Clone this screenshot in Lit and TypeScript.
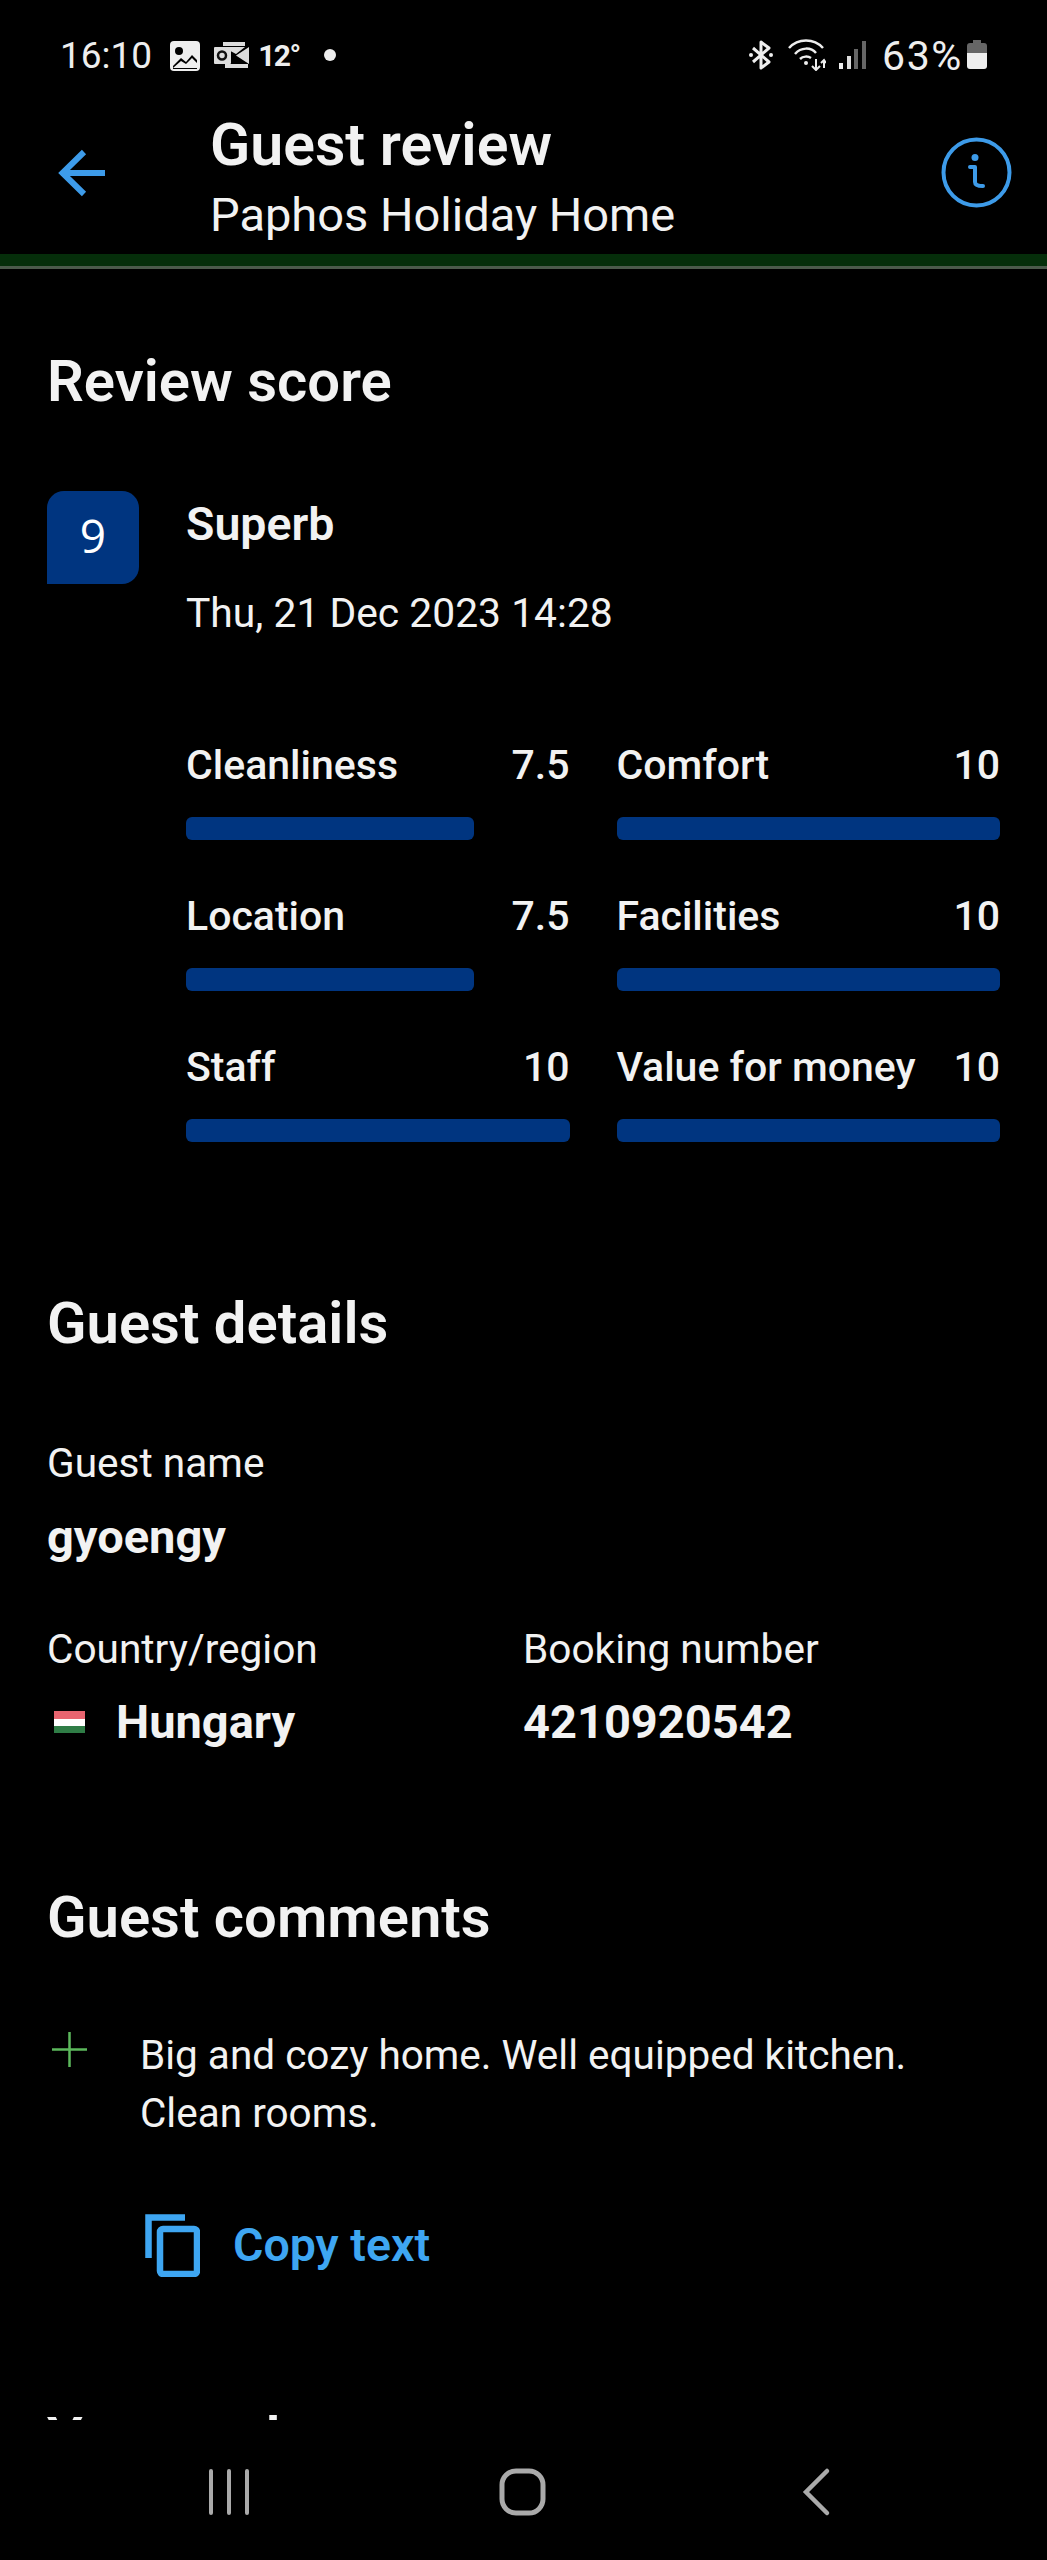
import { LitElement, html, css } from "lit";
import { customElement } from "lit/decorators.js";

const ratings: [string, string, number][] = [
  ["Cleanliness", "7.5", 75],
  ["Comfort", "10", 100],
  ["Location", "7.5", 75],
  ["Facilities", "10", 100],
  ["Staff", "10", 100],
  ["Value for money", "10", 100],
];

@customElement("app-root")
export class AppRoot extends LitElement {
  static styles = css`
    :host {
      display: flex;
      flex-direction: column;
      width: 1047px;
      height: 2560px;
      overflow: hidden;
      background: #000;
      color: #f2f2f2;
      font-family: Roboto, "Liberation Sans", sans-serif;
    }
    svg { display: block; flex: none; }
    .status {
      height: 96px;
      flex: none;
      display: flex;
      align-items: flex-start;
      padding: 39px 60px 0 60px;
      box-sizing: border-box;
    }
    .time, .pct {
      font-size: 37px;
      line-height: 34px;
      font-weight: 400;
      color: #eee;
    }
    .temp {
      font-size: 30px;
      font-weight: 700;
      line-height: 34px;
      margin-left: 9px;
      letter-spacing: -1.5px;
      color: #eee;
    }
    .i-img { margin: 2px 0 0 18px; }
    .i-out { margin: 3px 0 0 14px; }
    .i-dot { margin: 10px 0 0 24px; }
    .spacer { flex: 1; }
    .i-bt { margin: 1px 0 0 0; }
    .i-wifi { margin: 0 0 0 14px; }
    .i-sig { margin: 2px 0 0 13px; }
    .pct { margin-left: 16px; letter-spacing: 1.600px; font-size: 41px; }
    .i-bat { margin: 1px 0 0 4px; }

    .toolbar {
      height: 158px;
      flex: none;
      box-sizing: border-box;
      display: flex;
      align-items: center;
      padding: 0 35px 5px 58px;
    }
    .titles { flex: 1; margin-left: 104px; align-self: flex-start; margin-top: 19px; }
    .title { font-size: 59px; line-height: 60px; font-weight: 600; margin-bottom: 10px; }
    .sub { font-size: 47px; line-height: 60px; font-weight: 400; }
    .stripe { height: 12px; flex: none; background: #052e0a; }
    .rule { height: 3px; flex: none; background: #4b5a4b; }

    main {
      flex: 1;
      min-height: 0;
      overflow: hidden;
      padding: 82px 47px 0;
    }
    h2 { margin: 0; font-size: 58px; line-height: 60px; font-weight: 600; }
    .score { display: flex; gap: 47px; margin-top: 80px; }
    .badge {
      width: 92px;
      height: 93px;
      flex: none;
      box-sizing: border-box;
      padding-bottom: 6px;
      background: #003580;
      border-radius: 17px 17px 17px 0;
      display: flex;
      align-items: center;
      justify-content: center;
      font-family: "Open Sans", sans-serif;
      font-size: 46px;
      color: #fff;
    }
    .detail { flex: 1; padding-top: 3px; }
    .superb { font-size: 46.500px; line-height: 60px; font-weight: 600; margin-bottom: 30px; }
    .date { font-size: 40.800px; line-height: 58px; }
    .grid {
      display: grid;
      grid-template-columns: 1fr 1fr;
      column-gap: 47px;
      row-gap: 47px;
      margin-top: 94px;
    }
    .row { display: flex; justify-content: space-between; font-size: 41px; line-height: 58px; font-weight: 500; }
    .track { height: 23px; margin-top: 23px; }
    .bar { height: 100%; background: #003580; border-radius: 6px; }

    .details { margin-top: 151px; }
    .label { font-size: 40.600px; line-height: 58px; }
    .value { font-size: 47px; line-height: 60px; font-weight: 700; margin-top: 14.600px; }
    .name { margin-top: 81px; }
    .pair { display: grid; grid-template-columns: 476px 1fr; margin-top: 53px; }
    .country { display: flex; align-items: center; }
    .flag { width: 31px; height: 22px; margin: 0 31px 0 7px; flex: none; display: flex; flex-direction: column; }
    .flag i { flex: 1; display: block; }

    .comments { margin-top: 134.600px; }
    .comment { display: flex; margin-top: 79px; }
    .plus { width: 93px; flex: none; padding: 6px 0 0 5px; box-sizing: border-box; }
    .text { font-size: 40.500px; line-height: 58.500px; width: 830px; }
    .copy {
      display: flex;
      align-items: center;
      margin: 71px 0 0 98px;
      gap: 33px;
      height: 63px;
      color: #3ea6f2;
      font-size: 46.500px;
      line-height: 64px;
      font-weight: 600;
    }
    .next { margin-top: 131px; }

    .nav { height: 140px; flex: none; background: #000; display: flex; }
    .nav svg { width: 1047px; height: 140px; }
  `;

  render() {
    return html`
      <div class="status">
        <span class="time">16:10</span>
        <svg class="i-img" width="30" height="30" viewBox="0 0 30 30">
          <rect width="30" height="30" rx="4" fill="#eee" />
          <circle cx="9" cy="10" r="4" fill="#000" />
          <path d="M3 25l8-8 5 4 6-7 5 5v9H3z" fill="#000" />
          <path d="M3 27l8-7 5 3 6-6 5 5v5z" fill="#eee" />
        </svg>
        <svg class="i-out" width="35" height="26" viewBox="0 0 35 26">
          <path d="M9 0h22v4H9zM9 5h22l-9 7zM11 22h23v4H11z" fill="#ddd" />
          <rect y="5" width="17" height="17" rx="1" fill="#ddd" />
          <circle cx="8" cy="13.500" r="4" fill="none" stroke="#111" stroke-width="2.500" />
          <path d="M35 5v17l-13-8.500z" fill="#ddd" />
        </svg>
        <span class="temp">12°</span>
        <svg class="i-dot" width="12" height="12" viewBox="0 0 12 12"><circle cx="6" cy="6" r="6" fill="#eee" /></svg>
        <span class="spacer"></span>
        <svg class="i-bt" width="26" height="30" viewBox="0 0 26 30" fill="none" stroke="#eee" stroke-width="3" stroke-linejoin="round">
          <path d="M5 8l16 14-8 6V2l8 6L5 22" />
          <circle cx="3" cy="15" r="2" fill="#eee" stroke="none" />
          <circle cx="23" cy="15" r="2" fill="#eee" stroke="none" />
        </svg>
        <svg class="i-wifi" width="38" height="32" viewBox="0 0 38 32" fill="none" stroke="#eee" stroke-width="2.500">
          <path d="M1 9c9-10 25-10 34 0" />
          <path d="M7 15c6-7 16-7 21-1" />
          <path d="M12 20c3-3 8-3 11-1" />
          <circle cx="18" cy="24" r="2" fill="#eee" stroke="none" />
          <path d="M28 20v11M24 27l4 4 4-4" stroke-width="2" />
          <path d="M36 21v8M33 24l3-3 2 3" stroke-width="2" />
        </svg>
        <svg class="i-sig" width="27" height="28" viewBox="0 0 27 28">
          <rect x="0" y="22" width="4" height="6" fill="#eee" />
          <rect x="8" y="15" width="4" height="13" fill="#ddd" />
          <rect x="15" y="8" width="4" height="20" fill="#666" />
          <rect x="23" y="0" width="4" height="28" fill="#666" />
        </svg>
        <span class="pct">63%</span>
        <svg class="i-bat" width="20" height="29" viewBox="0 0 20 29">
          <path d="M6 0h8v3h3a3 3 0 013 3v7H0V6a3 3 0 013-3h3z" fill="#666" />
          <path d="M0 13h20v13a3 3 0 01-3 3H3a3 3 0 01-3-3z" fill="#eee" />
        </svg>
      </div>

      <div class="toolbar">
        <svg width="48" height="48" viewBox="0 0 48 48" fill="none" stroke="#3d9be9" stroke-width="6">
          <path d="M47 24H5M26 3L4.500 24 26 45" />
        </svg>
        <div class="titles">
          <div class="title">Guest review</div>
          <div class="sub">Paphos Holiday Home</div>
        </div>
        <svg width="71" height="71" viewBox="0 0 71 71" fill="none" stroke="#3d9be9" stroke-width="4">
          <circle cx="35.500" cy="35.500" r="33" />
          <path d="M29 30h5v15c0 3 3 4 8 4" stroke-linecap="round" stroke-linejoin="round" />
          <circle cx="34" cy="20.500" r="3.500" fill="#3d9be9" stroke="none" />
        </svg>
      </div>
      <div class="stripe"></div>
      <div class="rule"></div>

      <main>
        <h2>Review score</h2>
        <div class="score">
          <div class="badge">9</div>
          <div class="detail">
            <div class="superb">Superb</div>
            <div class="date">Thu, 21 Dec 2023 14:28</div>
            <div class="grid">
              ${ratings.map(
                ([n, v, w]) => html`
                  <div>
                    <div class="row"><span>${n}</span><span>${v}</span></div>
                    <div class="track"><div class="bar" style="width:${w}%"></div></div>
                  </div>
                `
              )}
            </div>
          </div>
        </div>

        <section class="details">
          <h2>Guest details</h2>
          <div class="label name">Guest name</div>
          <div class="value">gyoengy</div>
          <div class="pair">
            <div>
              <div class="label">Country/region</div>
              <div class="value country">
                <span class="flag"><i style="background:#e8646f"></i><i style="background:#fff"></i><i style="background:#2f7d46"></i></span>
                Hungary
              </div>
            </div>
            <div>
              <div class="label">Booking number</div>
              <div class="value">4210920542</div>
            </div>
          </div>
        </section>

        <section class="comments">
          <h2>Guest comments</h2>
          <div class="comment">
            <div class="plus">
              <svg width="35" height="35" viewBox="0 0 35 35" stroke="#5cb85c" stroke-width="2.500">
                <path d="M17.500 0v35M0 17.500h35" />
              </svg>
            </div>
            <div class="text">Big and cozy home. Well equipped kitchen. Clean rooms.</div>
          </div>
          <div class="copy">
            <svg width="55" height="63" viewBox="0 0 55 63" fill="none" stroke="#3ea6f2" stroke-width="6.500">
              <path d="M40 3.500H3.500V44" />
              <rect x="15" y="15" width="37" height="45" rx="3" />
            </svg>
            Copy text
          </div>
        </section>

        <h2 class="next">Your reply</h2>
      </main>

      <div class="nav">
        <svg viewBox="0 0 1047 140" fill="none" stroke="#aaa" stroke-width="4" stroke-linecap="round">
          <path d="M211 51v42M229 51v42M247 51v42" />
          <rect x="502" y="51" width="41" height="42" rx="14" stroke-width="5" />
          <path d="M827 51l-21 21 21 21" stroke-width="4.500" />
        </svg>
      </div>
    `;
  }
}
